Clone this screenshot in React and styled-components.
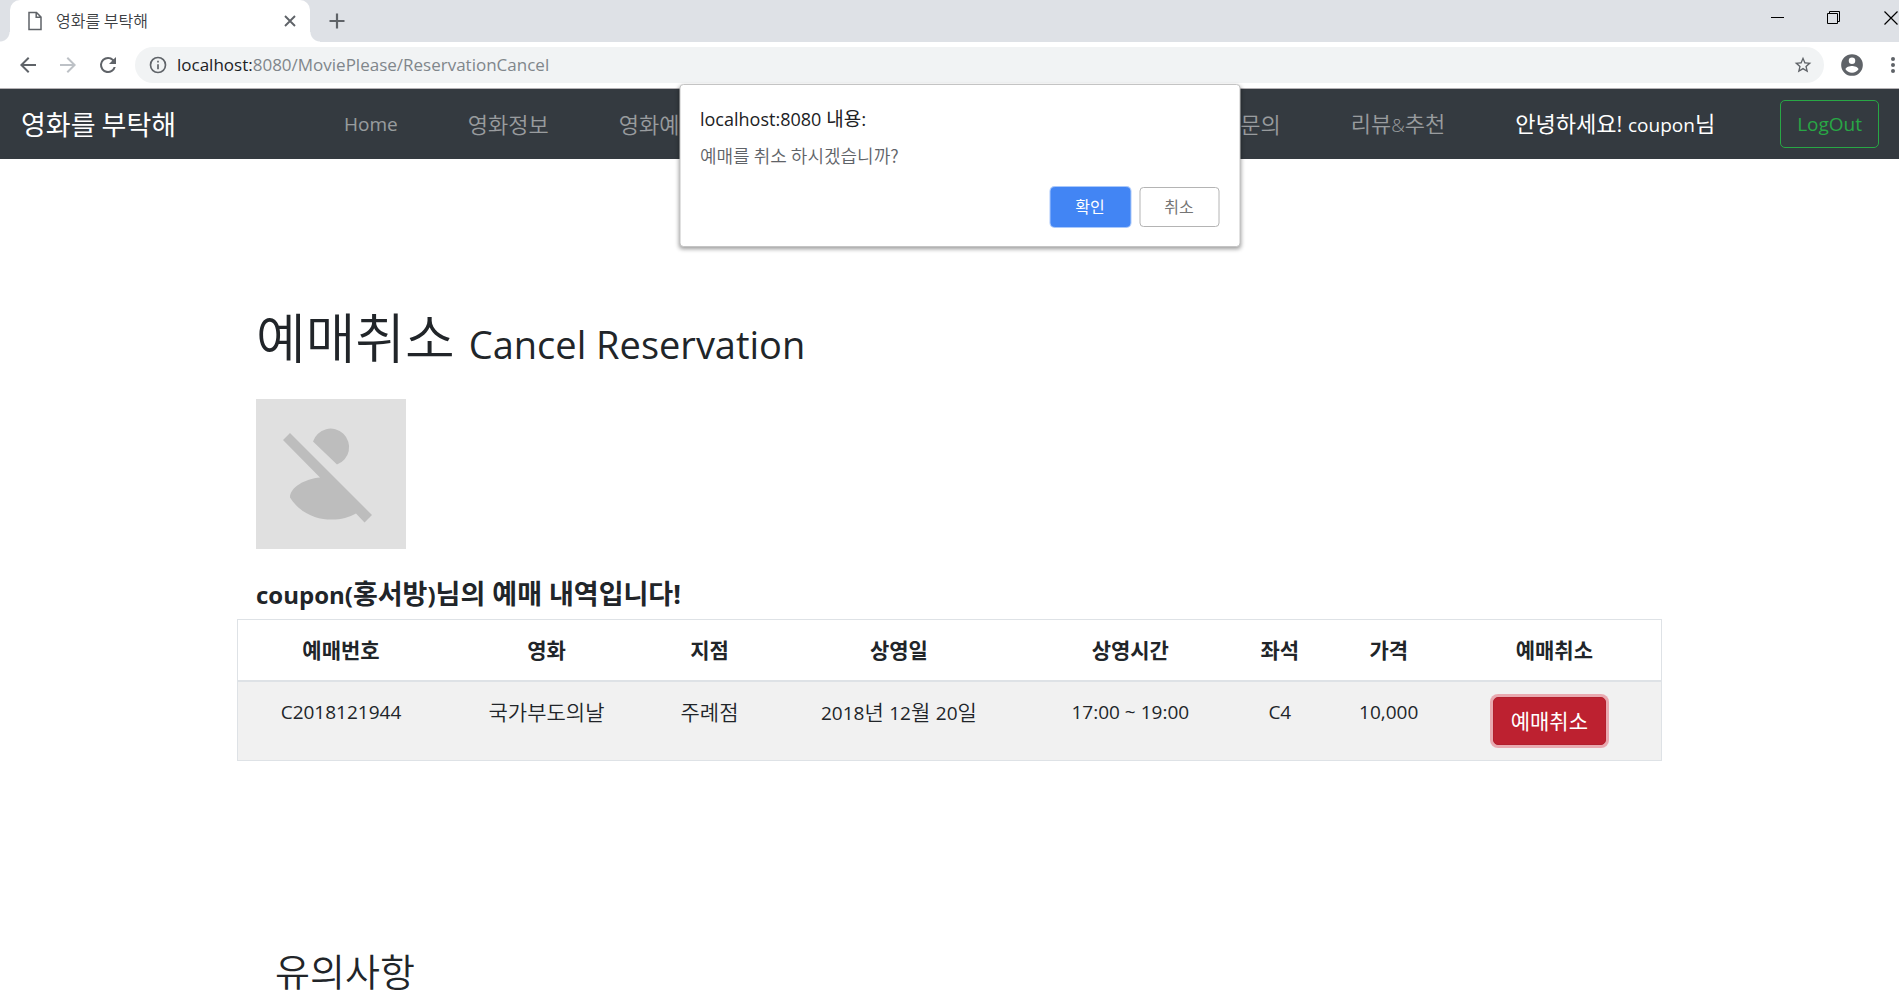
import React from 'react';
import styled, { createGlobalStyle, css } from 'styled-components';

const GlobalStyle = createGlobalStyle`
  *, *::before, *::after { box-sizing: border-box; }
  body {
    margin: 0;
    background: #fff;
    color: #212529;
    font-family: "Open Sans", "Noto Sans CJK KR", sans-serif;
    font-size: 19px;
    line-height: 30px;
    overflow: hidden;
  }
  h1, h2, h3, p { margin: 0; font-weight: 400; }
  button, input { font-family: inherit; }
`;

const korean = css`
  font-family: "Noto Sans CJK KR", sans-serif;
`;

/* ---------- browser frame ---------- */

const TabStrip = styled.div`
  display: flex;
  align-items: flex-end;
  height: 42px;
  padding-left: 10px;
  background: #dee1e6;
`;

const Tab = styled.div`
  position: relative;
  display: flex;
  align-items: center;
  width: 300px;
  height: 42px;
  padding: 0 13px 0 17px;
  background: #fff;
  border-radius: 10px 10px 0 0;

  &::before,
  &::after {
    content: "";
    position: absolute;
    bottom: 0;
    width: 10px;
    height: 10px;
  }
  &::before {
    right: 100%;
    background: radial-gradient(circle at 0 0, transparent 9px, #fff 10px);
  }
  &::after {
    left: 100%;
    background: radial-gradient(circle at 100% 0, transparent 9px, #fff 10px);
  }
`;

const TabTitle = styled.span`
  ${korean}
  flex: 1;
  margin-left: 13px;
  font-size: 16px;
  font-weight: 350;
  line-height: 20px;
  padding-bottom: 2px;
  color: #3c4043;
`;

const IconButton = styled.button`
  display: flex;
  align-items: center;
  justify-content: center;
  flex: none;
  width: ${(p) => p.$size || 20}px;
  height: ${(p) => p.$size || 20}px;
  padding: 0;
  border: 0;
  background: none;
  color: ${(p) => p.$color || '#5f6368'};
`;

const NewTab = styled.div`
  display: flex;
  align-items: center;
  height: 42px;
  margin-left: 17px;
`;

const WindowControls = styled.div`
  display: flex;
  align-items: center;
  gap: 37px;
  height: 36px;
  margin: 0 -2px 6px auto;
`;

const Toolbar = styled.div`
  display: flex;
  align-items: center;
  height: 47px;
  padding-left: 16px;
  background: #fff;
  border-bottom: 1px solid #b4b1b4;
`;

const NavButtons = styled.div`
  display: flex;
  gap: 16px;
`;

const AddressBar = styled.div`
  display: flex;
  align-items: center;
  flex: 1;
  height: 36px;
  margin: 0 15px;
  padding: 0 11px 0 13px;
  background: #f1f3f4;
  border-radius: 18px;
`;

const Address = styled.span`
  flex: 1;
  margin-left: 9px;
  font-size: 17px;
  line-height: 24px;
  color: #80868b;
`;

const AddressHost = styled.span`
  color: #202124;
`;

const ToolbarEnd = styled.div`
  display: flex;
  align-items: center;
  gap: 18px;
  margin-right: -4px;
`;

/* ---------- site navigation ---------- */

const Navbar = styled.nav`
  display: flex;
  align-items: center;
  height: 70px;
  padding: 0 20px 0 21px;
  background: #343a40;
`;

const NavGroup = styled.div`
  display: flex;
  align-items: center;
  gap: 70px;
  margin-left: ${(p) => (p.$end ? 'auto' : '0')};
`;

const Brand = styled.a`
  ${korean}
  margin-right: 168px;
  font-size: 27px;
  line-height: 38px;
  color: #fff;
  text-decoration: none;
`;

const NavLink = styled.a`
  font-size: ${(p) => (p.$latin ? 19 : 22)}px;
  font-weight: ${(p) => (p.$latin || p.$active ? 400 : 350)};
  color: ${(p) => (p.$active ? '#fff' : 'rgba(255, 255, 255, 0.5)')};
  text-decoration: none;
  white-space: nowrap;
`;

const Latin = styled.span`
  font-size: ${(p) => p.$size || 19}px;
`;

const LogoutButton = styled.button`
  height: 48px;
  margin-left: 65px;
  padding: 0 16px;
  background: transparent;
  border: 1px solid #28a745;
  border-radius: 5px;
  color: #28a745;
  font-size: 19px;
`;

/* ---------- confirm dialog ---------- */

const Dialog = styled.div`
  position: absolute;
  z-index: 10;
  top: 84px;
  left: calc(50% + 10px);
  width: 561px;
  padding: 20px 20px 19px;
  transform: translateX(-50%);
  background: #fff;
  border: 1px solid #c4c4c4;
  border-radius: 4px;
  box-shadow: 0 2px 4px rgba(0, 0, 0, 0.4);
`;

const DialogTitle = styled.h2`
  font-size: 19px;
  line-height: 28px;
  color: #202124;
`;

const DialogText = styled.p`
  ${korean}
  margin-top: 10px;
  font-size: 18px;
  font-weight: 350;
  line-height: 24px;
  color: #5f6368;
`;

const DialogActions = styled.div`
  display: flex;
  justify-content: flex-end;
  gap: 9px;
  margin-top: 20px;
`;

const DialogButton = styled.button`
  ${korean}
  width: 80px;
  height: 40px;
  padding: 0 0 2px;
  border: 1px solid ${(p) => (p.$primary ? '#4285f4' : '#b4b4b4')};
  border-radius: 4px;
  background: ${(p) => (p.$primary ? '#4285f4' : '#fff')};
  color: ${(p) => (p.$primary ? '#fff' : '#757575')};
  font-size: 16px;
  box-shadow: ${(p) => (p.$primary ? '0 0 0 1px #a9c8fb' : 'none')};
`;

/* ---------- page ---------- */

const Container = styled.main`
  max-width: 1425px;
  margin: 0 auto;
`;

const Intro = styled.header`
  padding: 139px 19px 0;
`;

const Title = styled.h1`
  font-size: 54px;
  font-weight: 350;
  line-height: 80px;
  white-space: nowrap;
`;

const TitleSmall = styled.small`
  font-size: 38px;
  font-weight: 400;
`;

const Avatar = styled.svg`
  display: block;
  width: 150px;
  height: 150px;
  margin-top: 15px;
`;

const Owner = styled.h2`
  margin-top: 27px;
  padding-bottom: 7px;
  font-size: 27px;
  line-height: 35px;
  font-weight: 700;
`;

const Table = styled.table`
  width: 100%;
  table-layout: fixed;
  border-collapse: collapse;
  border: 1px solid #dee2e6;
  text-align: center;
`;

const HeadCell = styled.th`
  width: ${(p) => p.$width};
  padding: ${(p) => (p.$last ? '14px 18px 16px 15px' : '14px 15px 16px')};
  border-bottom: 2px solid #dee2e6;
  ${korean}
  font-size: 21px;
  font-weight: 700;
`;

const BodyRow = styled.tr`
  background: #f1f1f1;
`;

const Cell = styled.td`
  padding: ${(p) => (p.$last ? '15px 28px 15px 15px' : '15px 0')};
  font-size: ${(p) => (p.$latin ? 19 : 21)}px;
  font-weight: ${(p) => (p.$latin ? 400 : 350)};
  vertical-align: top;
  white-space: nowrap;

  ${Latin} {
    font-weight: 400;
  }
`;

const CancelButton = styled.button`
  display: block;
  height: 48px;
  margin: 0 auto;
  padding: 0 17px;
  background: #bd2130;
  border: 1px solid #b21f2d;
  border-radius: 5px;
  box-shadow: 0 0 0 3px rgba(225, 83, 97, 0.45);
  color: #fff;
  font-size: 21px;
  line-height: 30px;
`;

const Notice = styled.section`
  padding: 185px 38px 0;
`;

const NoticeTitle = styled.h2`
  ${korean}
  font-size: 38px;
  font-weight: 350;
  line-height: 48px;
`;

const columns = [
  { label: '예매번호', width: '14.5%' },
  { label: '영화', width: '14.4%' },
  { label: '지점', width: '8.5%' },
  { label: '상영일', width: '18.1%' },
  { label: '상영시간', width: '14.4%' },
  { label: '좌석', width: '6.6%' },
  { label: '가격', width: '8.7%' },
  { label: '예매취소', width: '14.8%' },
];

function BrowserFrame() {
  return (
    <>
      <TabStrip>
        <Tab>
          <svg width="16" height="20" viewBox="0 0 16 20" fill="none" stroke="#5f6368" strokeWidth="1.5">
            <path d="M2 1.5h7.5L14 6v12.5H2z M9.2 1.5v4.8H14" />
          </svg>
          <TabTitle>영화를 부탁해</TabTitle>
          <IconButton $size={14} aria-label="탭 닫기">
            <svg width="12" height="12" viewBox="0 0 12 12" stroke="currentColor" strokeWidth="1.9">
              <path d="M1 1l10 10M11 1L1 11" />
            </svg>
          </IconButton>
        </Tab>
        <NewTab>
          <IconButton aria-label="새 탭">
            <svg width="16" height="16" viewBox="0 0 16 16" stroke="currentColor" strokeWidth="2.2">
              <path d="M8 0.5v15M0.5 8h15" />
            </svg>
          </IconButton>
        </NewTab>
        <WindowControls>
          <IconButton $color="#000" aria-label="최소화">
            <svg width="14" height="14" viewBox="0 0 14 14" stroke="currentColor">
              <path d="M1 6.5h13" />
            </svg>
          </IconButton>
          <IconButton $color="#000" aria-label="이전 크기로">
            <svg width="14" height="14" viewBox="0 0 14 14" fill="none" stroke="currentColor">
              <path d="M0.5 2.5h10v10h-10z M2.5 2.5v-2h10v10h-2" />
            </svg>
          </IconButton>
          <IconButton $color="#000" aria-label="닫기">
            <svg width="14" height="14" viewBox="0 0 14 14" stroke="currentColor" strokeWidth="1.2">
              <path d="M0.5 0.5l13 13M13.5 0.5l-13 13" />
            </svg>
          </IconButton>
        </WindowControls>
      </TabStrip>
      <Toolbar>
        <NavButtons>
          <IconButton $size={24} aria-label="뒤로">
            <svg width="24" height="24" viewBox="0 0 24 24" fill="currentColor">
              <path d="M20 11H7.83l5.59-5.59L12 4l-8 8 8 8 1.41-1.41L7.83 13H20z" />
            </svg>
          </IconButton>
          <IconButton $size={24} $color="#bdc1c6" aria-label="앞으로">
            <svg width="24" height="24" viewBox="0 0 24 24" fill="currentColor">
              <path d="M4 11h12.17l-5.59-5.59L12 4l8 8-8 8-1.41-1.41L16.17 13H4z" />
            </svg>
          </IconButton>
          <IconButton $size={24} aria-label="새로고침">
            <svg width="24" height="24" viewBox="0 0 24 24" fill="currentColor">
              <path d="M17.65 6.35A7.96 7.96 0 0 0 12 4a8 8 0 1 0 7.73 10h-2.08A6 6 0 1 1 12 6c1.66 0 3.14.69 4.22 1.78L13 11h7V4z" />
            </svg>
          </IconButton>
        </NavButtons>
        <AddressBar>
          <svg width="20" height="20" viewBox="0 0 24 24" fill="#5f6368">
            <path d="M11 17h2v-6h-2v6zm1-15a10 10 0 1 0 0 20 10 10 0 0 0 0-20zm0 18a8 8 0 1 1 0-16 8 8 0 0 1 0 16zM11 9h2V7h-2v2z" />
          </svg>
          <Address>
            <AddressHost>localhost:</AddressHost>8080/MoviePlease/ReservationCancel
          </Address>
          <IconButton aria-label="북마크">
            <svg width="22" height="22" viewBox="0 0 24 24" fill="currentColor">
              <path d="M22 9.24l-7.19-.62L12 2 9.19 8.63 2 9.24l5.46 4.73L5.82 21 12 17.27 18.18 21l-1.63-7.03L22 9.24zM12 15.4l-3.76 2.27 1-4.28-3.32-2.88 4.38-.38L12 6.1l1.71 4.04 4.38.38-3.32 2.88 1 4.28L12 15.4z" />
            </svg>
          </IconButton>
        </AddressBar>
        <ToolbarEnd>
          <IconButton $size={26} aria-label="프로필">
            <svg width="26" height="26" viewBox="0 0 24 24" fill="currentColor">
              <path d="M12 2a10 10 0 1 0 0 20 10 10 0 0 0 0-20zm0 3a3 3 0 1 1 0 6 3 3 0 0 1 0-6zm0 14.2a7.2 7.2 0 0 1-6-3.22c.03-1.99 4-3.08 6-3.08 1.99 0 5.97 1.09 6 3.08a7.2 7.2 0 0 1-6 3.22z" />
            </svg>
          </IconButton>
          <IconButton aria-label="메뉴">
            <svg width="20" height="20" viewBox="0 0 20 20" fill="currentColor">
              <circle cx="10" cy="4" r="2" />
              <circle cx="10" cy="10" r="2" />
              <circle cx="10" cy="16" r="2" />
            </svg>
          </IconButton>
        </ToolbarEnd>
      </Toolbar>
    </>
  );
}

function ConfirmDialog() {
  return (
    <Dialog role="alertdialog" aria-labelledby="confirm-title" aria-describedby="confirm-text">
      <DialogTitle id="confirm-title">
        <Latin $size={18}>localhost:8080</Latin> 내용:
      </DialogTitle>
      <DialogText id="confirm-text">예매를 취소 하시겠습니까?</DialogText>
      <DialogActions>
        <DialogButton $primary>확인</DialogButton>
        <DialogButton>취소</DialogButton>
      </DialogActions>
    </Dialog>
  );
}

export default function App() {
  return (
    <>
      <GlobalStyle />
      <BrowserFrame />
      <Navbar>
        <Brand href="#">영화를 부탁해</Brand>
        <NavGroup>
          <NavLink href="#" $latin>Home</NavLink>
          <NavLink href="#">영화정보</NavLink>
          <NavLink href="#">영화예매</NavLink>
        </NavGroup>
        <NavGroup $end>
          <NavLink href="#">문의</NavLink>
          <NavLink href="#">리뷰<Latin>&amp;</Latin>추천</NavLink>
          <NavLink href="#" $active>안녕하세요! <Latin>coupon</Latin>님</NavLink>
        </NavGroup>
        <LogoutButton>LogOut</LogoutButton>
      </Navbar>
      <ConfirmDialog />
      <Container>
        <Intro>
          <Title>예매취소 <TitleSmall>Cancel Reservation</TitleSmall></Title>
          <Avatar viewBox="0 0 150 150" role="img" aria-label="프로필 사진 없음">
            <rect width="150" height="150" fill="#e0e0e0" />
            <g fill="#bdbdbd">
              <path d="M57 42.500A18.500 18.500 0 1 1 81 65.500z" />
              <path d="M34 34l82 82-7.500 7.500-8.500-9C84 124 51 125 34 98.500 34 88 49 80 64 78.500L27 41z" />
            </g>
          </Avatar>
          <Owner><Latin $size={24}>coupon(</Latin>홍서방<Latin $size={24}>)</Latin>님의 예매 내역입니다!</Owner>
        </Intro>
        <Table>
          <thead>
            <tr>
              {columns.map((c, i) => (
                <HeadCell key={c.label + i} $width={c.width} $last={i === columns.length - 1} scope="col">
                  {c.label}
                </HeadCell>
              ))}
            </tr>
          </thead>
          <tbody>
            <BodyRow>
              <Cell $latin>C2018121944</Cell>
              <Cell>국가부도의날</Cell>
              <Cell>주례점</Cell>
              <Cell><Latin>2018</Latin>년 <Latin>12</Latin>월 <Latin>20</Latin>일</Cell>
              <Cell $latin>17:00 ~ 19:00</Cell>
              <Cell $latin>C4</Cell>
              <Cell $latin>10,000</Cell>
              <Cell $last><CancelButton>예매취소</CancelButton></Cell>
            </BodyRow>
          </tbody>
        </Table>
        <Notice>
          <NoticeTitle>유의사항</NoticeTitle>
        </Notice>
      </Container>
    </>
  );
}
